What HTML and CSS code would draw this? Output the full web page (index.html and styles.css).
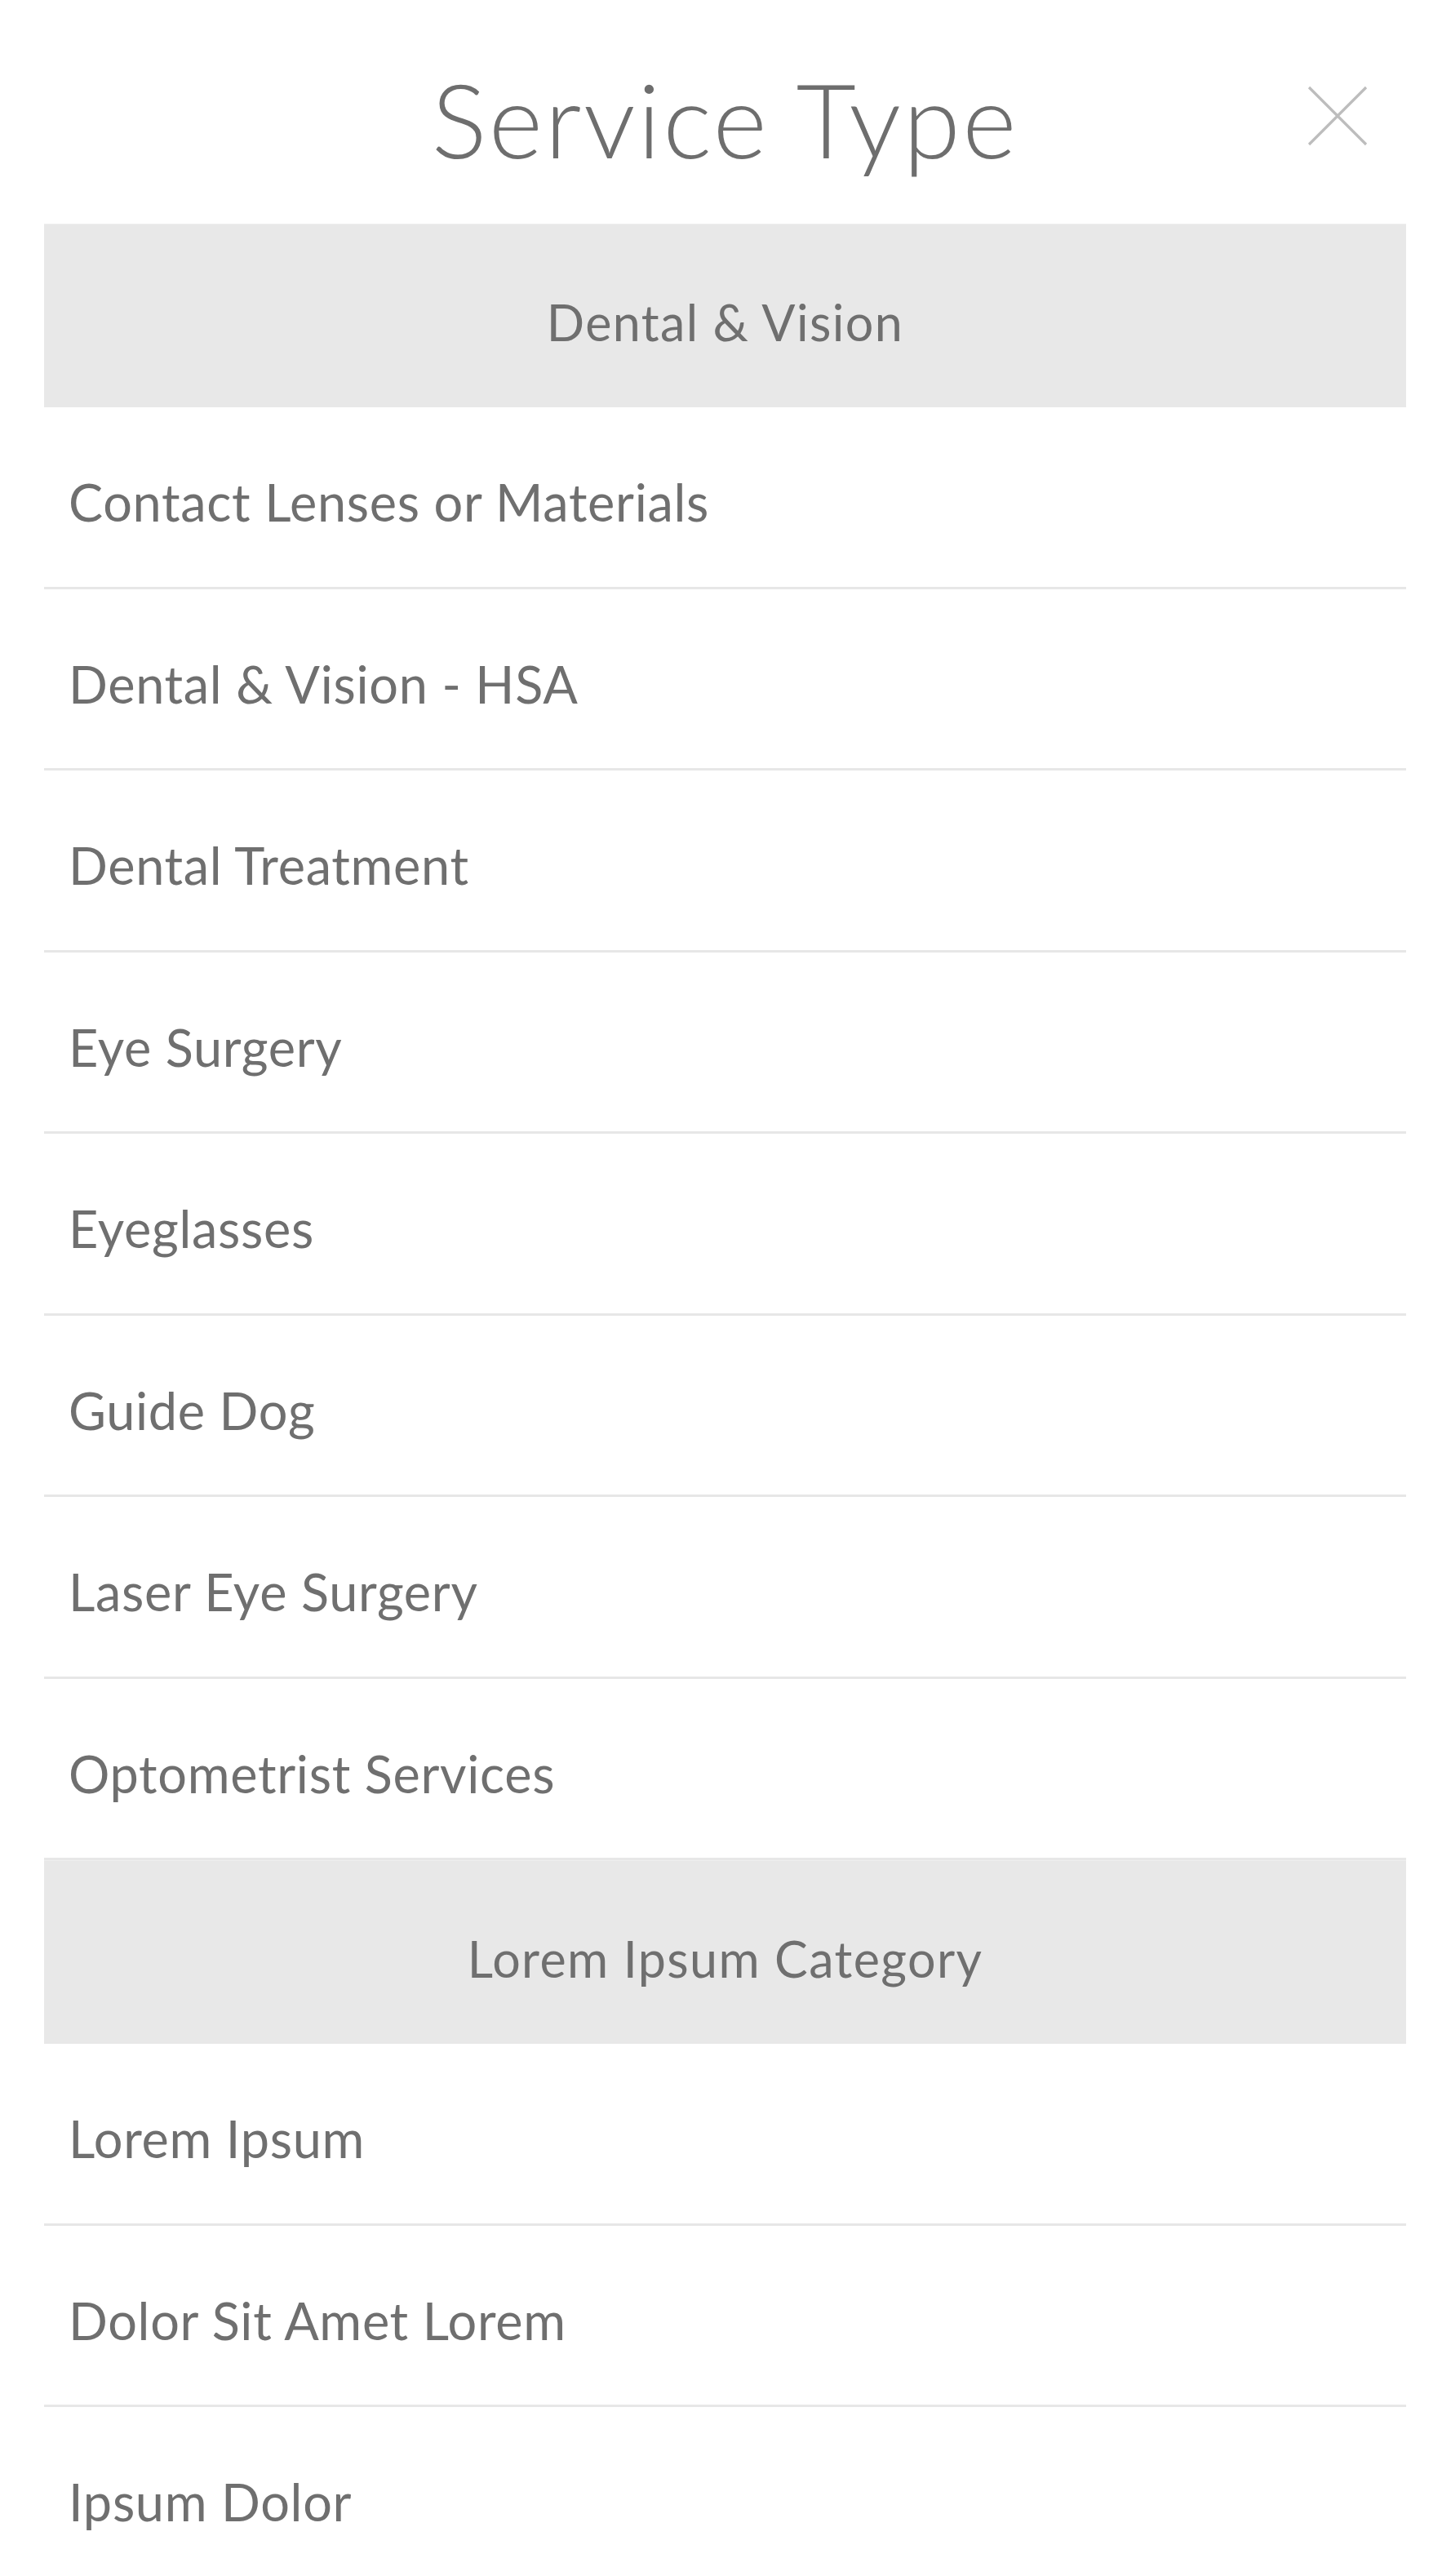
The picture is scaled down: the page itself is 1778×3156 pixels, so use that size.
FILE: index.html
```html
<!DOCTYPE html>
<html lang="en">
<head>
  <meta charset="UTF-8" />
  <meta name="viewport" content="width=device-width, initial-scale=1.0"/>
  <title>Service Type</title>
  <link rel="stylesheet" href="styles.css">
</head>
<body>
  <div class="sheet">
    <header class="sheet-header">
      <span></span>
      <h1>Service Type</h1>
      <button class="close" aria-label="Close">
        <svg width="74" height="74" viewBox="0 0 74 74">
          <path d="M2 2 L72 72 M72 2 L2 72" stroke="#bdbdbd" stroke-width="3.2" fill="none"/>
        </svg>
      </button>
    </header>

    <ul class="options">
      <li class="group">Dental &amp; Vision</li>
      <li class="option">Contact Lenses or Materials</li>
      <li class="option">Dental &amp; Vision - HSA</li>
      <li class="option">Dental Treatment</li>
      <li class="option">Eye Surgery</li>
      <li class="option">Eyeglasses</li>
      <li class="option">Guide Dog</li>
      <li class="option">Laser Eye Surgery</li>
      <li class="option">Optometrist Services</li>
      <li class="group">Lorem Ipsum Category</li>
      <li class="option">Lorem Ipsum</li>
      <li class="option">Dolor Sit Amet Lorem</li>
      <li class="option">Ipsum Dolor</li>
    </ul>
  </div>
</body>
</html>
```

FILE: styles.css
```css
body {
  margin: 0;
  background: #ffffff;
  font-family: 'Lato', 'Open Sans', sans-serif;
  color: #6f6f6f;
}

.sheet {
  padding: 0 55px 0 54px;
}

.sheet-header {
  height: 274px;
  display: grid;
  grid-template-columns: 1fr auto 1fr;
  align-items: center;
}

.sheet-header h1 {
  margin: 0;
  padding-top: 16px;
  font-size: 127px;
  font-weight: 300;
  letter-spacing: 2.6px;
  color: #6e6e6e;
}

.close {
  justify-self: end;
  margin-right: 47px;
  margin-top: 10px;
  padding: 0;
  border: none;
  background: none;
  cursor: pointer;
  line-height: 0;
}

.options {
  list-style: none;
  margin: 0;
  padding: 0;
}

.group {
  height: 225px;
  display: flex;
  align-items: center;
  justify-content: center;
  padding-top: 14px;
  box-sizing: border-box;
  background: #e8e8e8;
  border-top: 1px solid #eeeeee;
  font-size: 61px;
  letter-spacing: 1.4px;
}

.option {
  height: 222.5px;
  box-sizing: border-box;
  display: flex;
  align-items: center;
  padding: 12px 0 0 30px;
  border-bottom: 3px solid #e7e7e7;
  font-size: 63px;
  letter-spacing: 0.7px;
}
```
